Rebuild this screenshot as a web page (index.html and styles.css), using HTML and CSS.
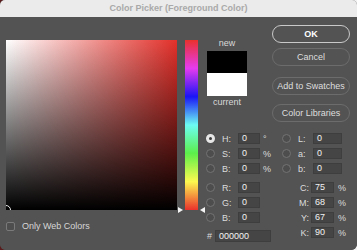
FILE: index.html
```html
<!DOCTYPE html>
<html>
<head>
<meta charset="utf-8">
<link rel="stylesheet" href="styles.css">
</head>
<body>
<div class="window">
  <div class="titlebar">Color Picker (Foreground Color)</div>
  <div class="content">
    <div class="left">
      <div class="pickers">
        <div class="field"><div class="marker"></div></div>
        <div class="hue-wrap">
          <div class="hue"></div>
          <div class="tri tri-l"></div>
          <div class="tri tri-r"></div>
        </div>
      </div>
      <div class="webcolors">
        <div class="checkbox"></div>
        <span>Only Web Colors</span>
      </div>
    </div>
    <div class="right">
      <div class="top">
        <div class="swatches">
          <div class="sw-label">new</div>
          <div class="sw sw-new"></div>
          <div class="sw sw-cur"></div>
          <div class="sw-label cur-label">current</div>
        </div>
        <div class="buttons">
          <div class="btn btn-ok">OK</div>
          <div class="btn btn-cancel">Cancel</div>
          <div class="btn btn-add">Add to Swatches</div>
          <div class="btn btn-lib">Color Libraries</div>
        </div>
      </div>
      <div class="fields">
        <div class="col col-l">
          <div class="row"><div class="radio on"></div><span class="lbl">H:</span><div class="inp">0</div><span class="unit">°</span></div>
          <div class="row"><div class="radio"></div><span class="lbl">S:</span><div class="inp">0</div><span class="unit">%</span></div>
          <div class="row"><div class="radio"></div><span class="lbl">B:</span><div class="inp">0</div><span class="unit">%</span></div>
          <div class="row grp"><div class="radio"></div><span class="lbl">R:</span><div class="inp">0</div></div>
          <div class="row"><div class="radio"></div><span class="lbl">G:</span><div class="inp">0</div></div>
          <div class="row"><div class="radio"></div><span class="lbl">B:</span><div class="inp">0</div></div>
          <div class="row hexrow"><span class="hash">#</span><div class="inp hex">000000</div></div>
        </div>
        <div class="col col-r">
          <div class="row"><div class="radio"></div><span class="lbl lbl-r">L:</span><div class="inp inp-r">0</div></div>
          <div class="row"><div class="radio"></div><span class="lbl lbl-r">a:</span><div class="inp inp-r">0</div></div>
          <div class="row"><div class="radio"></div><span class="lbl lbl-r">b:</span><div class="inp inp-r">0</div></div>
          <div class="row grp"><span class="clbl">C:</span><div class="inp inp-c">75</div><span class="pct">%</span></div>
          <div class="row"><span class="clbl">M:</span><div class="inp inp-c">68</div><span class="pct">%</span></div>
          <div class="row"><span class="clbl">Y:</span><div class="inp inp-c">67</div><span class="pct">%</span></div>
          <div class="row"><span class="clbl">K:</span><div class="inp inp-c">90</div><span class="pct">%</span></div>
        </div>
      </div>
    </div>
  </div>
</div>
</body>
</html>
```
FILE: styles.css
```css
html, body {
  margin: 0;
  padding: 0;
}
body {
  width: 357px;
  height: 250px;
  overflow: hidden;
  background: linear-gradient(to right, #5a1c1c 50%, #f2f2f2 50%);
  font-family: "Liberation Sans", Arial, sans-serif;
  font-size: 9px;
  color: #dcdcdc;
}
.window {
  width: 357px;
  height: 250px;
  display: flex;
  flex-direction: column;
  border-radius: 5px 5px 6px 6px;
  overflow: hidden;
  background: #535353;
}
.titlebar {
  height: 17px;
  flex: none;
  background: #ebebeb;
  color: #a9a9a9;
  font-weight: bold;
  font-size: 9px;
  line-height: 17px;
  text-align: center;
}
.content {
  flex: 1;
  display: flex;
  background: #535353;
}
.left {
  padding: 23px 0 0 6px;
  display: flex;
  flex-direction: column;
}
.pickers {
  display: flex;
  gap: 8px;
}
.field {
  width: 171px;
  height: 170px;
  position: relative;
  overflow: hidden;
  background:
    linear-gradient(to top, #000 0%, rgba(0,0,0,0) 100%),
    linear-gradient(to right, #ffffff 0%, #e3302a 100%);
}
.marker {
  position: absolute;
  left: -5px;
  bottom: -5px;
  width: 8px;
  height: 8px;
  border: 1px solid #f0f0f0;
  border-radius: 50%;
}
.hue-wrap {
  position: relative;
  width: 13px;
  height: 170px;
}
.hue {
  width: 13px;
  height: 170px;
  background: linear-gradient(to bottom,
    #e9312c 0%,
    #e63bf0 16.67%,
    #1a14f5 33.33%,
    #6cfbf3 50%,
    #5cf04a 66.67%,
    #fdf84f 83.33%,
    #e9312c 100%);
}
.tri {
  position: absolute;
  top: 167px;
  width: 0;
  height: 0;
  border-top: 3px solid transparent;
  border-bottom: 3px solid transparent;
}
.tri-l {
  left: -7px;
  border-left: 5px solid #f4f4f4;
}
.tri-r {
  right: -7px;
  border-right: 5px solid #f4f4f4;
}
.webcolors {
  margin-top: 11px;
  display: flex;
  align-items: center;
  gap: 7px;
  color: #d6d6d6;
}
.checkbox {
  width: 7px;
  height: 7px;
  border: 1px solid #7a7a7a;
  border-radius: 2px;
  background: #4e4e4e;
}
.right {
  display: flex;
  flex-direction: column;
  padding-top: 8px;
}
.top {
  display: flex;
  align-items: flex-start;
  height: 97px;
}
.swatches {
  margin-left: 9px;
  margin-top: 13px;
  width: 40px;
  display: flex;
  flex-direction: column;
  align-items: center;
}
.sw-label {
  height: 11px;
  line-height: 11px;
  color: #d8d8d8;
}
.sw {
  width: 40px;
}
.sw-new {
  margin-top: 2px;
  height: 22px;
  background: #000;
}
.sw-cur {
  height: 23px;
  background: #fff;
}
.cur-label {
  margin-top: 1px;
}
.buttons {
  margin-left: 25px;
  width: 78px;
  display: flex;
  flex-direction: column;
}
.btn {
  box-sizing: border-box;
  height: 18px;
  border: 1px solid #6c6c6c;
  border-radius: 9px;
  text-align: center;
  line-height: 16px;
  color: #dedede;
}
.btn-ok {
  border-color: #c9c9c9;
  color: #ffffff;
  font-weight: bold;
}
.btn-cancel { margin-top: 5px; }
.btn-add { margin-top: 11px; }
.btn-lib { margin-top: 9px; }
.fields {
  margin-top: 11px;
  display: flex;
}
.col {
  display: flex;
  flex-direction: column;
  gap: 4px;
}
.col-l {
  margin-left: 8px;
  width: 76px;
}
.row {
  height: 11px;
  display: flex;
  align-items: center;
}
.row.grp {
  margin-top: 4px;
}
.radio {
  box-sizing: border-box;
  width: 9px;
  height: 9px;
  border-radius: 50%;
  border: 1px solid #737373;
  background: #4d4d4d;
}
.radio.on {
  border: 3px solid #e6e6e6;
  background: #3a3a3a;
}
.lbl {
  margin-left: 7px;
  width: 16px;
}
.lbl-r {
  width: 15px;
}
.inp {
  box-sizing: border-box;
  width: 22px;
  height: 11px;
  background: #454545;
  border: 1px solid #3e3e3e;
  padding-left: 3px;
  line-height: 9px;
  color: #f2f2f2;
}
.inp-r {
  width: 29px;
}
.unit {
  margin-left: 3px;
}
.hexrow {
  margin-top: 3px;
  height: 12px;
}
.hash {
  margin-left: 1px;
  width: 8px;
}
.hex {
  width: 56px;
  height: 12px;
  line-height: 10px;
}
.clbl {
  width: 27px;
  text-align: right;
}
.inp-c {
  margin-left: 2px;
  width: 23px;
}
.pct {
  margin-left: 4px;
}
```
